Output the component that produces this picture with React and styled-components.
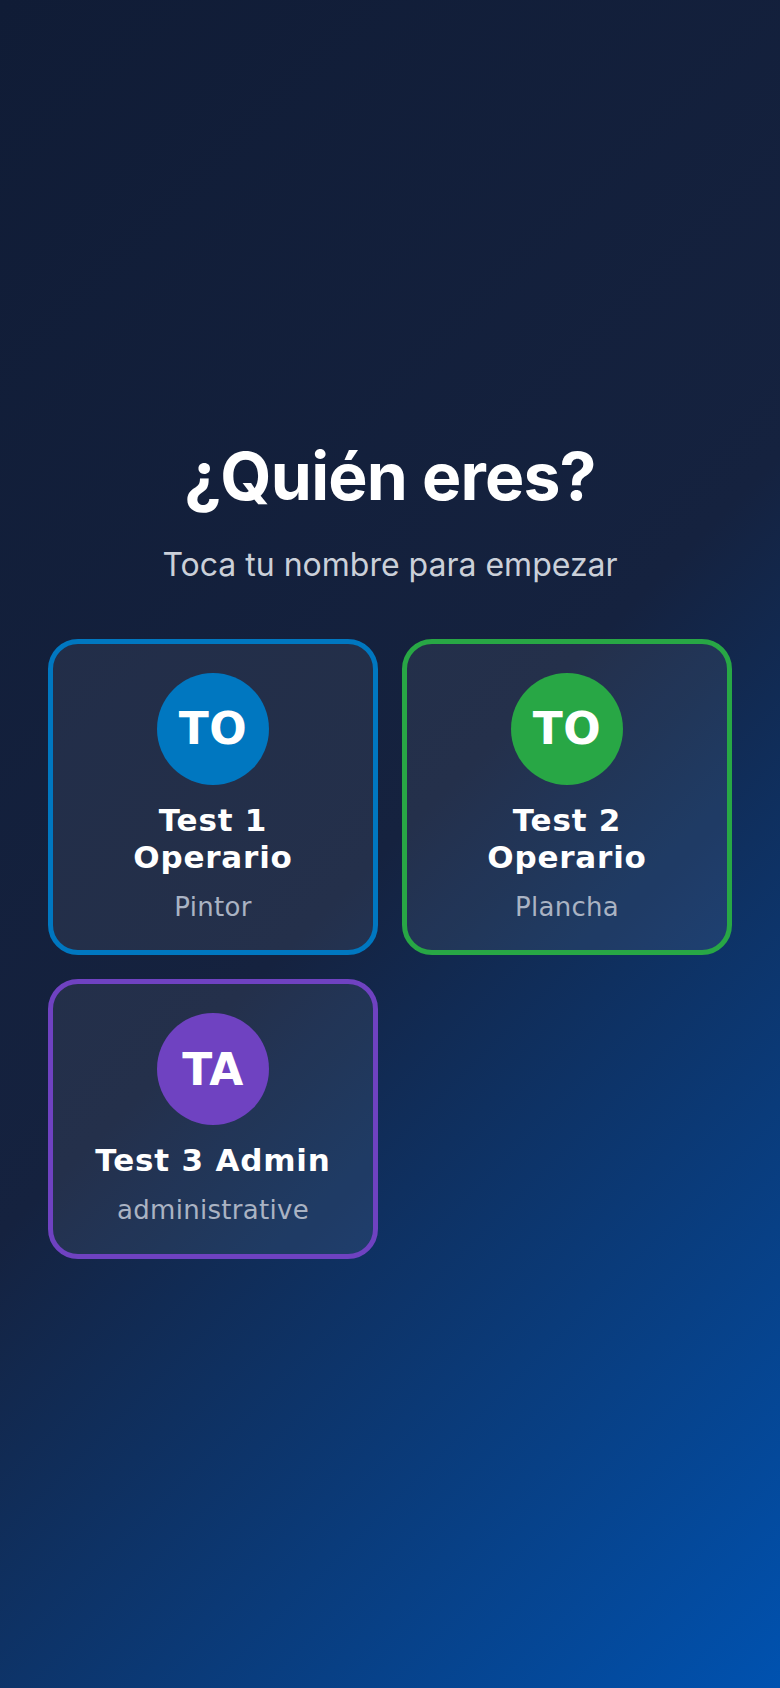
import React from "react";
import styled, { createGlobalStyle } from "styled-components";

const GlobalStyle = createGlobalStyle`
  html, body {
    margin: 0;
    padding: 0;
  }
  body {
    font-family: "DejaVu Sans", sans-serif;
    background: #131f3b;
  }
  * { box-sizing: border-box; }
`;

const Page = styled.main`
  min-height: 100vh;
  width: 100%;
  display: flex;
  flex-direction: column;
  justify-content: center;
  align-items: center;
  padding: 8px 48px 0;
  background: linear-gradient(135deg, #101c36 0%, #15223f 50%, #0052b0 100%);
`;

const Title = styled.h1`
  margin: 0;
  font-family: "Inter", "Liberation Sans", sans-serif;
  font-weight: 700;
  font-size: 66px;
  line-height: 1.2;
  color: #ffffff;
  text-align: center;
  letter-spacing: -0.012em;
`;

const Subtitle = styled.p`
  margin: 24px 0 50px;
  font-family: "Inter", "Liberation Sans", sans-serif;
  font-weight: 400;
  font-size: 32px;
  line-height: 1.5;
  color: #cbd0d9;
  text-align: center;
`;

const Grid = styled.div`
  width: 100%;
  display: grid;
  grid-template-columns: 1fr 1fr;
  gap: 24px;
`;

const Card = styled.button`
  display: flex;
  flex-direction: column;
  align-items: center;
  padding: 29px 28px 27px;
  border: 5px solid ${(p) => p.$color};
  border-radius: 30px;
  background: rgba(255, 255, 255, 0.065);
  cursor: pointer;
  font-family: "DejaVu Sans", sans-serif;
  color: #ffffff;
`;

const Avatar = styled.div`
  width: 112px;
  height: 112px;
  flex-shrink: 0;
  border-radius: 50%;
  background: ${(p) => p.$color};
  display: flex;
  align-items: center;
  justify-content: center;
  font-family: "DejaVu Sans", sans-serif;
  font-weight: 700;
  font-size: 44px;
  letter-spacing: 0.5px;
  color: #ffffff;
  margin-bottom: 17px;
`;

const Name = styled.div`
  font-weight: 700;
  font-size: 31px;
  line-height: 1.2;
  letter-spacing: 0.8px;
  color: #ffffff;
  text-align: center;
  margin-bottom: 16px;
`;

const Role = styled.div`
  font-weight: 400;
  font-size: 26px;
  line-height: 1.2;
  letter-spacing: 0.3px;
  color: #aab3c3;
  text-align: center;
`;

const users = [
  { initials: "TO", name: "Test 1 Operario", role: "Pintor", color: "#0077c0" },
  { initials: "TO", name: "Test 2 Operario", role: "Plancha", color: "#28a745" },
  { initials: "TA", name: "Test 3 Admin", role: "administrative", color: "#6f42c1" },
];

export default function App() {
  return (
    <>
      <GlobalStyle />
      <Page>
        <Title>¿Quién eres?</Title>
        <Subtitle>Toca tu nombre para empezar</Subtitle>
        <Grid>
          {users.map((u, i) => (
            <Card key={i} $color={u.color} type="button">
              <Avatar $color={u.color}>{u.initials}</Avatar>
              <Name>{u.name}</Name>
              <Role>{u.role}</Role>
            </Card>
          ))}
        </Grid>
      </Page>
    </>
  );
}
